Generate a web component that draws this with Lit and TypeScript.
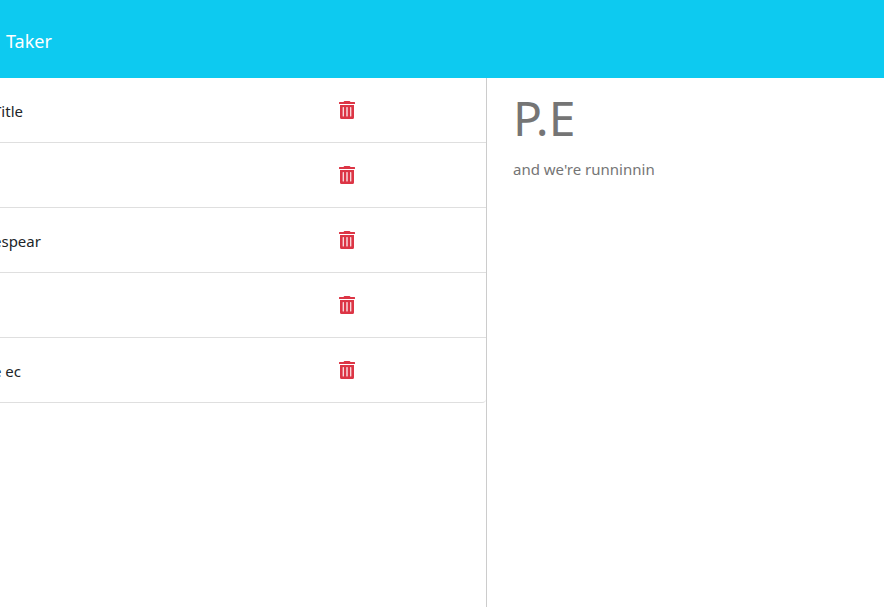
import { LitElement, html, css } from "lit";
import { customElement, state } from "lit/decorators.js";

interface Note {
  id: number;
  title: string;
}

@customElement("app-root")
export class AppRoot extends LitElement {
  static styles = css`
    :host {
      display: flex;
      flex-direction: column;
      min-height: 100vh;
      background: #fff;
      color: #212529;
      font: 15px/24px "Segoe UI", "Noto Sans", sans-serif;
    }
    * {
      box-sizing: border-box;
    }
    .navbar {
      display: flex;
      align-items: center;
      padding: 26px 6px 22px;
      background: #0dcaf0;
    }
    .brand {
      color: #fff;
      font-size: 18px;
      line-height: 30px;
      text-decoration: none;
    }
    .main {
      flex: 1;
      display: grid;
      grid-template-columns: 487fr 397fr;
    }
    .sidebar {
      border-right: 1px solid #ccc;
      overflow: hidden;
    }
    .list {
      list-style: none;
      margin: 0;
      padding: 0;
    }
    .item {
      display: flex;
      align-items: center;
      height: 65px;
      border-bottom: 1px solid #dfdfdf;
    }
    .item:last-child {
      border-bottom-right-radius: 4px;
    }
    .title {
      flex: 1;
      margin-left: -7px;
      padding-top: 2px;
      white-space: nowrap;
    }
    .delete {
      display: flex;
      margin-right: 131px;
      padding: 0;
      border: 0;
      background: none;
      color: #dc3545;
      cursor: pointer;
    }
    .icon {
      display: block;
      width: 16px;
      height: 18px;
      fill: currentColor;
    }
    .editor {
      display: flex;
      flex-direction: column;
      gap: 11px;
      padding: 12px 26px;
      min-width: 0;
    }
    .field {
      display: block;
      width: 100%;
      margin: 0;
      padding: 0;
      border: 0;
      outline: 0;
      resize: none;
      background: transparent;
      color: #757575;
      font: inherit;
    }
    .heading {
      height: 56px;
      font-size: 48px;
      line-height: 56px;
    }
    .body {
      flex: 1;
    }
  `;

  @state() private notes: Note[] = [
    { id: 1, title: "Title" },
    { id: 2, title: "" },
    { id: 3, title: "espear" },
    { id: 4, title: "" },
    { id: 5, title: "e ec" },
  ];

  private remove(id: number) {
    this.notes = this.notes.filter((note) => note.id !== id);
  }

  private renderNote(note: Note) {
    return html`
      <li class="item">
        <span class="title">${note.title}</span>
        <button class="delete" aria-label="Delete note" @click=${() => this.remove(note.id)}>
          <svg class="icon" viewBox="0 0 16 18" aria-hidden="true">
            <path
              fill-rule="evenodd"
              d="M.5 1h4l.5-.7q.2-.3.6-.3h4.8q.4 0 .6.3l.5.7h4q.5 0 .5.5v1.1q0 .5-.5.5h-15q-.5 0-.5-.5V1.500Q0 1 .5 1zM1 4h14v12.500q0 1.500-1.500 1.500h-11Q1 18 1 16.500zM4.200 6a.5.5 0 0 0-.5.5v8.500a.5.5 0 0 0 1.100 0V6.500a.5.5 0 0 0-.6-.5zM8 6a.5.5 0 0 0-.6.5v8.500a.6.6 0 0 0 1.200 0V6.500A.5.5 0 0 0 8 6zM11.800 6a.5.5 0 0 0-.6.5v8.500a.5.5 0 0 0 1.100 0V6.500a.5.5 0 0 0-.5-.5z"
            />
          </svg>
        </button>
      </li>
    `;
  }

  render() {
    return html`
      <nav class="navbar"><a class="brand" href="#">Taker</a></nav>
      <main class="main">
        <section class="sidebar">
          <ul class="list">
            ${this.notes.map((note) => this.renderNote(note))}
          </ul>
        </section>
        <section class="editor">
          <input class="field heading" aria-label="Note title" .value=${"P.E"} />
          <textarea class="field body" aria-label="Note text" .value=${"and we're runninnin"}></textarea>
        </section>
      </main>
    `;
  }
}
